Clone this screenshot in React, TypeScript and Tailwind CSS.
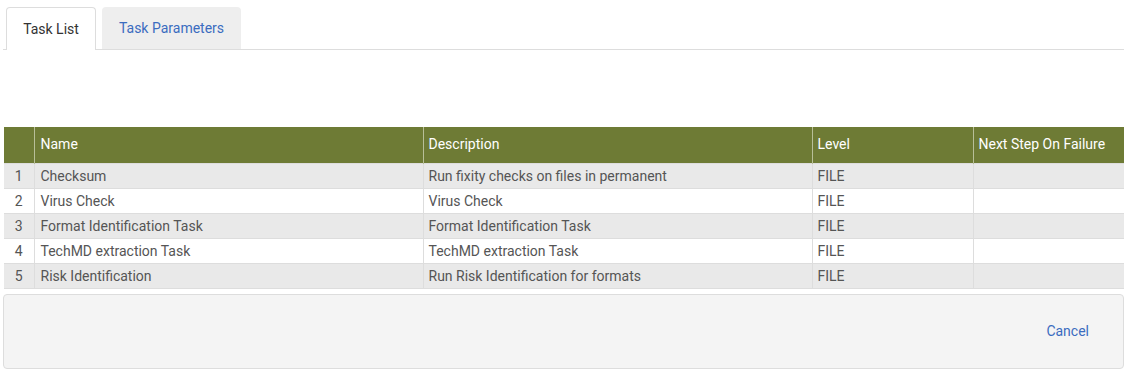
import React from "react";

const rows = [
  ["Checksum", "Run fixity checks on files in permanent", "FILE", ""],
  ["Virus Check", "Virus Check", "FILE", ""],
  ["Format Identification Task", "Format Identification Task", "FILE", ""],
  ["TechMD extraction Task", "TechMD extraction Task", "FILE", ""],
  ["Risk Identification", "Run Risk Identification for formats", "FILE", ""],
];

export default function App() {
  return (
    <div className="w-[1125px] h-[372px] bg-white text-[14px] text-[#555]" style={{ fontFamily: "Roboto, 'Liberation Sans', sans-serif" }}>
      <div className="pt-[7px] pl-[3px] pr-px">
        <div className="flex items-end border-b border-[#dddddd] pl-[3px] gap-[6px]">
          <div className="h-[43px] -mb-px w-[90px] flex items-center justify-center bg-white border border-b-0 border-[#dddddd] rounded-t-[4px] text-[#333]">
            Task List
          </div>
          <div className="h-[42px] w-[139px] flex items-center justify-center bg-[#eeeeee] rounded-t-[4px] text-[#3b6cc0]">
            Task Parameters
          </div>
        </div>
      </div>
      <div className="pl-[4px] pr-px mt-[77px]">
        <table className="w-[1120px] border-collapse table-fixed">
          <colgroup>
            <col className="w-[30px]" />
            <col className="w-[389px]" />
            <col className="w-[389px]" />
            <col className="w-[161px]" />
            <col className="w-[151px]" />
          </colgroup>
          <thead>
            <tr className="bg-[#6e7b35] text-white h-[36px] border-b border-[#dddddd]">
              <th className="border-r border-[#b8bf98] font-normal"></th>
              <th className="border-r border-[#b8bf98] font-normal text-left pl-[6px]">Name</th>
              <th className="border-r border-[#b8bf98] font-normal text-left pl-[5px]">Description</th>
              <th className="border-r border-[#b8bf98] font-normal text-left pl-[5px]">Level</th>
              <th className="font-normal text-left pl-[5px]">Next Step On Failure</th>
            </tr>
          </thead>
          <tbody>
            {rows.map((r, i) => (
              <tr key={i} className={`h-[25px] border-b border-[#dddddd] ${i % 2 === 0 ? "bg-[#e9e9e9]" : "bg-white"}`}>
                <td className="border-r border-[#dddddd] text-center pt-px">{i + 1}</td>
                <td className="border-r border-[#dddddd] pl-[6px] pt-px">{r[0]}</td>
                <td className="border-r border-[#dddddd] pl-[5px] pt-px">{r[1]}</td>
                <td className="border-r border-[#dddddd] pl-[5px] pt-px">{r[2]}</td>
                <td className="pl-[5px] pt-px">{r[3]}</td>
              </tr>
            ))}
          </tbody>
        </table>
      </div>
      <div className="pl-[3px] pr-px mt-[5px]">
        <div className="h-[75px] bg-[#f4f4f4] border border-[#dddddd] rounded-[4px] flex items-center justify-end pr-[34px]">
          <span className="text-[#3b6cc0]">Cancel</span>
        </div>
      </div>
    </div>
  );
}
